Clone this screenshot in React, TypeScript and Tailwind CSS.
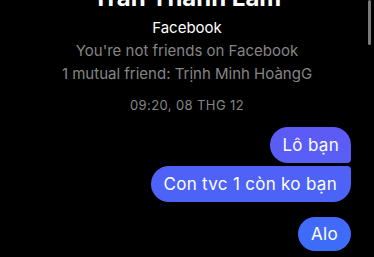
import React from "react";

const font = { fontFamily: "Inter, 'Noto Sans', sans-serif" };

export default function App() {
  return (
    <div
      className="relative w-[374px] h-[257px] overflow-hidden bg-black text-white"
      style={font}
    >
      {/* profile header, scrolled partly out of view */}
      <div className="flex flex-col items-center text-center">
        <h1 className="mt-[-16px] text-[24px] leading-[28px] font-bold">Trần Thanh Lâm</h1>
        <p className="mt-[4px] text-[15px] leading-[23px] text-white">Facebook</p>
        <p className="text-[15px] leading-[23px] text-[#858585]">You're not friends on Facebook</p>
        <p className="text-[15px] leading-[23px] text-[#858585]">1 mutual friend: Trịnh Minh HoàngG</p>
        <p className="mt-[12px] text-[13px] leading-[16px] tracking-[0.4px] text-[#858585]">
          09:20, 08 THG 12
        </p>
      </div>

      {/* messages */}
      <div className="mt-[14px] pr-[23px] flex flex-col items-end text-[17px] leading-[20px] tracking-[0.3px]">
        <div className="rounded-[18px] rounded-br-[4px] bg-linear-to-b from-[#5e59f6] to-[#565ff6] px-[12px] py-2">
          Lô bạn
        </div>
        <div className="mt-[3px] rounded-[18px] rounded-tr-[4px] bg-linear-to-b from-[#5161f7] to-[#4a64f7] pl-[12px] pr-[14px] py-2">
          Con tvc 1 còn ko bạn
        </div>
        <div className="mt-[15px] rounded-[18px] bg-linear-to-b from-[#4368f8] to-[#3b6ef8] px-[13px] py-[7px]">
          Alo
        </div>
      </div>

      {/* scrollbar */}
      <div className="absolute top-0 right-[3px] w-[3px] h-[45px] rounded-full bg-[#7b7b7b]" />
    </div>
  );
}
